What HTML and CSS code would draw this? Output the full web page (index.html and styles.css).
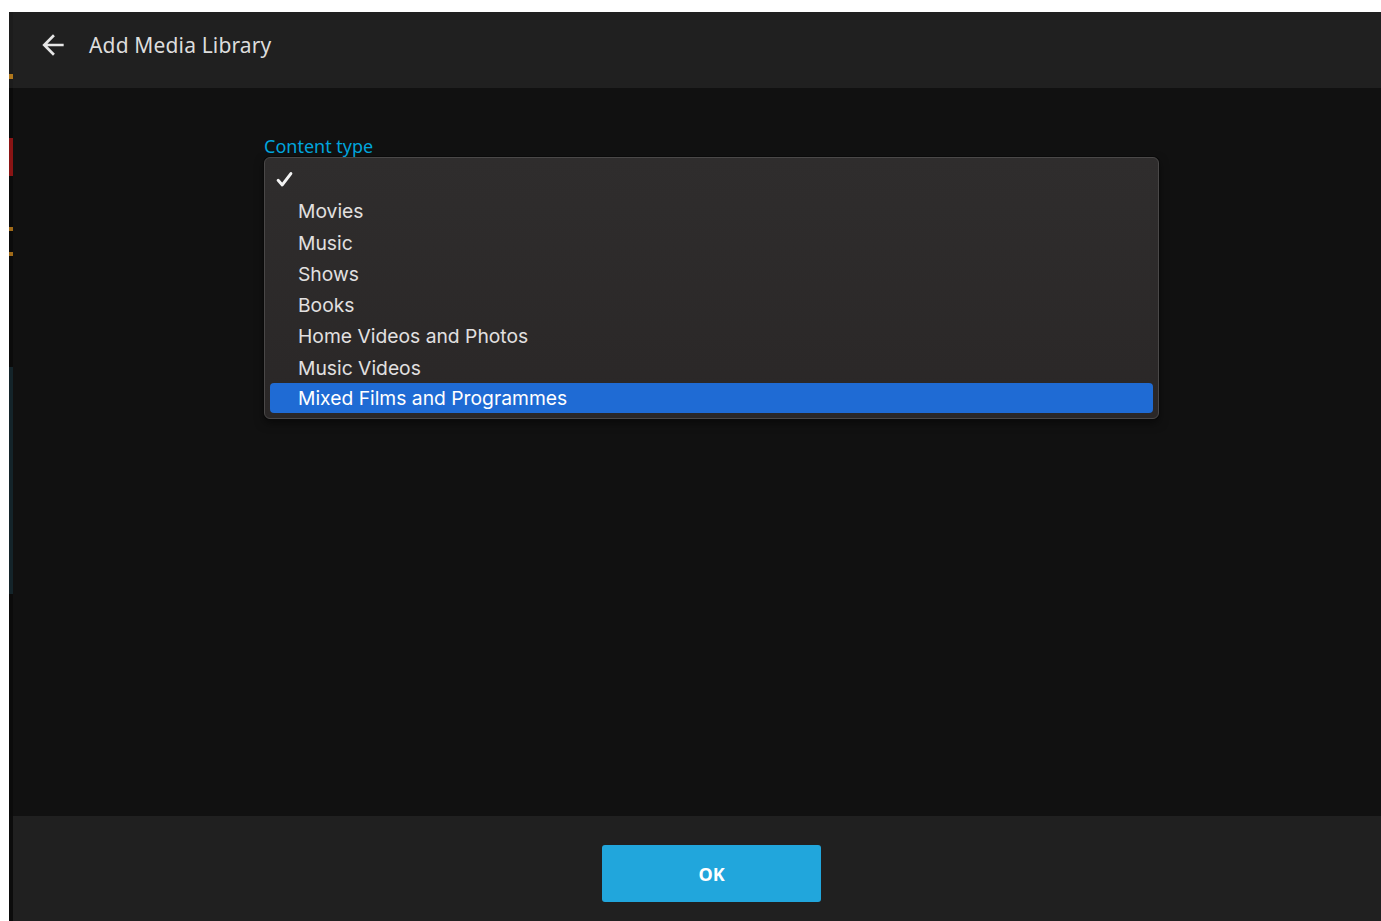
FILE: index.html
```html
<!DOCTYPE html>
<html lang="en">
<head>
<meta charset="utf-8">
<title>Add Media Library</title>
<link rel="stylesheet" href="styles.css">
</head>
<body>
<div class="window">
  <div class="edge"></div>
  <div class="dialog">
    <header class="dialog-header">
      <button class="back" aria-label="Back">
        <svg width="32" height="32" viewBox="0 0 24 24"><path d="M20 11H7.83l5.59-5.59L12 4l-8 8 8 8 1.41-1.41L7.83 13H20v-2z" fill="#e6e6e6"/></svg>
      </button>
      <h1 class="title">Add Media Library</h1>
    </header>
    <main class="dialog-body">
      <div class="field">
        <label class="field-label">Content type</label>
        <ul class="select-menu">
          <li class="option checked">
            <svg class="check" width="17" height="17" viewBox="0 0 16 16"><path d="M2 8.8l3.9 4.3L14 2.4" fill="none" stroke="#f2f2f2" stroke-width="2.8" stroke-linecap="round" stroke-linejoin="round"/></svg>
          </li>
          <li class="option">Movies</li>
          <li class="option">Music</li>
          <li class="option">Shows</li>
          <li class="option">Books</li>
          <li class="option">Home Videos and Photos</li>
          <li class="option">Music Videos</li>
          <li class="option selected">Mixed Films and Programmes</li>
        </ul>
      </div>
    </main>
    <footer class="dialog-footer">
      <button class="ok">OK</button>
    </footer>
  </div>
</div>
</body>
</html>
```

FILE: styles.css
```css
html, body {
  margin: 0;
  padding: 0;
  background: #ffffff;
  height: 100%;
  overflow: hidden;
}

.window {
  display: flex;
  margin: 12px 0 0 9px;
  height: 909px;
}

/* sliver of the page underneath the dialog */
.edge {
  width: 4px;
  flex: none;
  background:
    linear-gradient(to bottom,
      #1c1c1c 0, #1c1c1c 62px,
      #b0771c 62px, #b0771c 67px,
      #1c1c1c 67px, #1c1c1c 76px,
      #0b0b0b 76px, #0b0b0b 126px,
      #8a1414 126px, #8a1414 164px,
      #0b0b0b 164px, #0b0b0b 215px,
      #a06a18 215px, #a06a18 219px,
      #0b0b0b 219px, #0b0b0b 240px,
      #a06a18 240px, #a06a18 244px,
      #0b0b0b 244px, #0b0b0b 355px,
      #14242a 355px, #14242a 582px,
      #0b0b0b 582px, #0b0b0b 804px,
      #0c0c0c 804px);
}

.dialog {
  flex: 1;
  display: flex;
  flex-direction: column;
  background: #111111;
  font-family: "Noto Sans", "Open Sans", sans-serif;
}

.dialog-header {
  height: 76px;
  box-sizing: border-box;
  padding-bottom: 10px;
  flex: none;
  display: flex;
  align-items: center;
  background: #202020;
}

.back {
  background: none;
  border: 0;
  padding: 0;
  margin: 0 0 0 24px;
  width: 32px;
  height: 32px;
  display: flex;
  align-items: center;
  justify-content: center;
}

.title {
  margin: 0 0 0 20px;
  font-size: 21px;
  line-height: 28px;
  font-weight: 400;
  color: #dddddd;
  letter-spacing: 0.15px;
}

.dialog-body {
  flex: 1;
  padding: 47px 0 0 251px;
}

.field {
  width: 895px;
}

.field-label {
  display: block;
  color: #00a4dc;
  font-size: 18px;
  line-height: 22px;
  height: 22px;
  padding-top: 1px;
  margin-top: -1px;
}

.select-menu {
  list-style: none;
  margin: 0;
  padding: 6px 5px 5px;
  border: 1px solid #4a4848;
  border-radius: 6px;
  background: linear-gradient(to bottom, #2f2d2d, #2a2727);
  box-shadow: 0 0 0 1px #0a0a0a, 0 4px 10px rgba(0, 0, 0, 0.5);
  font-family: "Inter", "Liberation Sans", sans-serif;
}

.option {
  height: 31.3px;
  line-height: 32px;
  padding-left: 28px;
  font-size: 19.3px;
  color: #e2e0e0;
  border-radius: 4px;
}

.option.checked {
  display: flex;
  align-items: center;
  padding-left: 6px;
}

.option.selected {
  background: #1f6bd4;
  color: #ffffff;
  height: 30px;
  line-height: 31px;
}

.dialog-footer {
  height: 105px;
  box-sizing: border-box;
  padding-top: 29px;
  flex: none;
  background: #202020;
  display: flex;
  align-items: flex-start;
  justify-content: center;
}

.ok {
  width: 219px;
  height: 57px;
  margin-left: 29px;
  border: 0;
  border-radius: 3px;
  background: #21a6dc;
  color: #ffffff;
  font-family: "Noto Sans", "Open Sans", sans-serif;
  font-size: 18px;
  font-weight: 700;
}
```
